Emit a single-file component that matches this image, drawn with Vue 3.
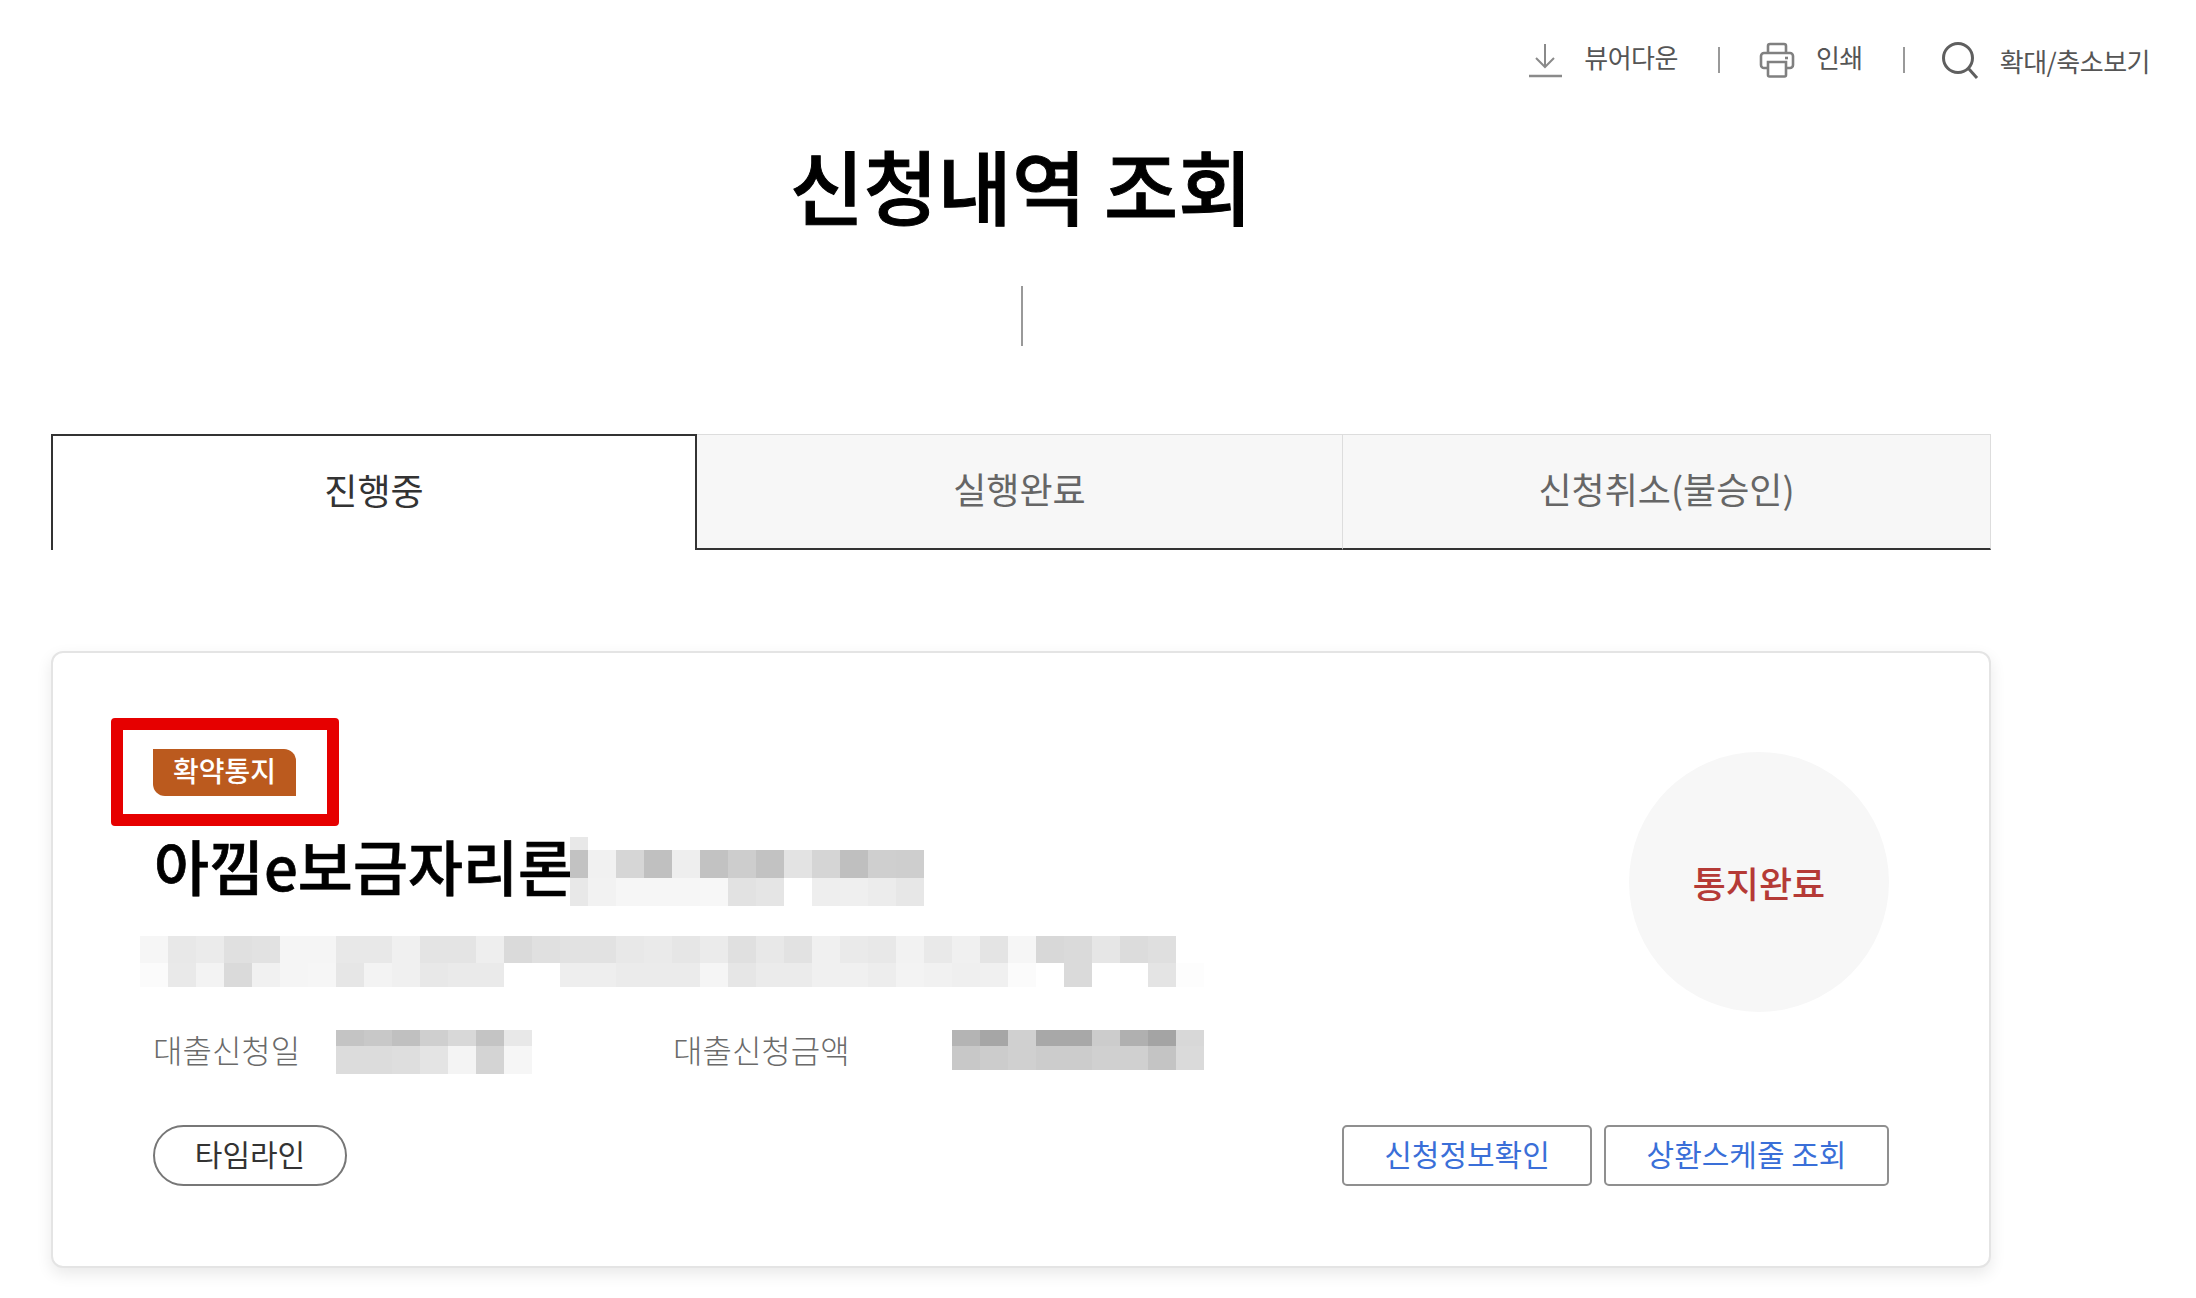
<script setup>
const mosaicTitle = [
  { h: 13, cells: ['#e8e8e8'] },
  { h: 28, cells: ['#c2c2c2','#f1f1f1','#d6d6d6','#c0c0c0','#eeeeee','#c2c2c2','#cdcdcd','#c2c2c2','#e3e3e3','#d5d5d5','#bfbfbf','#cfcfcf','#cecece'] },
  { h: 28, cells: ['#e8e8e8','#f2f2f2','#f6f6f6','#f6f6f6','#f6f6f6','#f7f7f7','#e2e2e2','#e5e5e5','#ffffff','#eeeeee','#efefef','#ececec','#e7e7e7'] },
]
const mosaicAddr = [
  { h: 27, cells: ['#f6f6f6','#e8e8e8','#ebebeb','#e0e0e0','#e2e2e2','#f5f5f5','#f5f5f5','#e8e8e8','#e8e8e8','#f0f0f0','#e4e4e4','#e4e4e4','#eeeeee','#dadada','#e0e0e0','#e2e2e2','#e2e2e2','#e8e8e8','#eaeaea','#e6e6e6','#ebebeb','#e0e0e0','#e8e8e8','#e2e2e2','#f0f0f0','#eaeaea','#e8e8e8','#f2f2f2','#e9e9e9','#f0f0f0','#e4e4e4','#f6f6f6','#d8d8d8','#dadada','#e6e6e6','#dcdcdc','#dfdfdf','#ffffff'] },
  { h: 24, cells: ['#fbfbfb','#e9e9e9','#f3f3f3','#dadada','#f1f1f1','#f5f5f5','#f6f6f6','#e6e6e6','#f3f3f3','#f0f0f0','#e8e8e8','#eaeaea','#eaeaea','#ffffff','#ffffff','#eeeeee','#eeeeee','#ebebeb','#ebebeb','#ebebeb','#f5f5f5','#e6e6e6','#ebebeb','#ebebeb','#f0f0f0','#f0f0f0','#ededed','#f3f3f3','#f1f1f1','#efefef','#f0f0f0','#fbfbfb','#ffffff','#dadada','#ffffff','#ffffff','#e4e4e4','#fdfdfd'] },
]
const mosaicDate = [
  { h: 16, cells: ['#c4c4c4','#c8c8c8','#c0c0c0','#cfcfcf','#d8d8d8','#c4c4c4','#e8e8e8'] },
  { h: 28, cells: ['#dcdcdc','#dcdcdc','#dedede','#e4e4e4','#f4f4f4','#d4d4d4','#f6f6f6'] },
]
const mosaicAmount = [
  { h: 16, cells: ['#b4b4b4','#a6a6a6','#d0d0d0','#a8a8a8','#a8a8a8','#cccccc','#b0b0b0','#a4a4a4','#d8d8d8'] },
  { h: 24, cells: ['#c8c8c8','#cccccc','#d0d0d0','#cccccc','#cccccc','#d0d0d0','#d0d0d0','#c4c4c4','#dadada'] },
]
const tabs = ['진행중', '실행완료', '신청취소(불승인)']
</script>

<template>
  <div class="page">
    <div class="tools">
      <div class="tool">
        <svg width="36" height="36" viewBox="0 0 36 36" fill="none" stroke="#8a8a8a" stroke-width="2">
          <path d="M18 2v23M9 16l9 9 9-9" />
          <path d="M2 34h33" stroke-width="2.5" />
        </svg>
        <span>뷰어다운</span>
      </div>
      <i class="sep s1"></i>
      <div class="tool">
        <svg width="36" height="36" viewBox="0 0 36 36" fill="none" stroke="#808080" stroke-width="2.6">
          <path d="M9 11V4a2 2 0 0 1 2-2h14a2 2 0 0 1 2 2v7" />
          <path d="M9 26H5a3 3 0 0 1-3-3V14a3 3 0 0 1 3-3h26a3 3 0 0 1 3 3v9a3 3 0 0 1-3 3h-4" />
          <path d="M9 20h18v13a1.5 1.5 0 0 1-1.5 1.500h-15A1.500 1.500 0 0 1 9 33z" />
          <path d="M26 16h3" />
        </svg>
        <span>인쇄</span>
      </div>
      <i class="sep s2"></i>
      <div class="tool zoomtool">
        <svg width="38" height="38" viewBox="0 0 38 38" fill="none" stroke="#5f5f5f" stroke-width="3">
          <circle cx="17" cy="17" r="14.500" />
          <path d="M27.500 27.500L36 37" />
        </svg>
        <span>확대/축소보기</span>
      </div>
    </div>

    <div class="content">
      <h1 class="title">신청내역 조회</h1>
      <div class="divider"></div>

      <div class="tabs">
        <div v-for="(t, i) in tabs" :key="t" class="tab" :class="{ active: i === 0 }">{{ t }}</div>
      </div>

      <section class="card">
        <div class="card-main">
          <div class="badge-box"><span class="badge">확약통지</span></div>
          <div class="name-row">
            <h2 class="name">아낌e보금자리론</h2>
            <div class="mosaic title-mosaic">
              <div v-for="(r, i) in mosaicTitle" :key="i" class="m-row" :style="{ height: r.h + 'px' }">
                <b v-for="(c, j) in r.cells" :key="j" class="m-cell" :style="{ background: c }"></b>
              </div>
            </div>
          </div>
          <div class="mosaic addr">
            <div v-for="(r, i) in mosaicAddr" :key="i" class="m-row" :style="{ height: r.h + 'px' }">
              <b v-for="(c, j) in r.cells" :key="j" class="m-cell" :style="{ background: c }"></b>
            </div>
          </div>
          <div class="info">
            <span class="label l1">대출신청일</span>
            <div class="mosaic">
              <div v-for="(r, i) in mosaicDate" :key="i" class="m-row" :style="{ height: r.h + 'px' }">
                <b v-for="(c, j) in r.cells" :key="j" class="m-cell" :style="{ background: c }"></b>
              </div>
            </div>
            <span class="label l2">대출신청금액</span>
            <div class="mosaic">
              <div v-for="(r, i) in mosaicAmount" :key="i" class="m-row" :style="{ height: r.h + 'px' }">
                <b v-for="(c, j) in r.cells" :key="j" class="m-cell" :style="{ background: c }"></b>
              </div>
            </div>
          </div>
        </div>
        <div class="circle">통지완료</div>
        <div class="actions">
          <button class="pill">타임라인</button>
          <div class="btns">
            <button class="btn w1">신청정보확인</button>
            <button class="btn w2">상환스케줄 조회</button>
          </div>
        </div>
      </section>
    </div>
  </div>
</template>

<style>
html, body { margin: 0; background: #fff; }
</style>

<style scoped>
.page {
  width: 2196px;
  height: 1298px;
  overflow: hidden;
  font-family: "Noto Sans CJK KR", "Noto Sans", sans-serif;
  box-sizing: border-box;
  position: relative;
}
.tools {
  display: flex;
  align-items: center;
  justify-content: flex-end;
  height: 36px;
  padding: 42px 46px 0 0;
  color: #555;
  font-size: 26px;
}
.tool { display: flex; align-items: center; gap: 21px; }
.tool span { position: relative; top: -4px; letter-spacing: -0.5px; }
.zoomtool span { top: 0; }
.sep { width: 2px; height: 26px; background: #999; }
.s1 { margin: 0 39px 0 40px; }
.s2 { margin: 0 36px 0 40px; }
.content { width: 1940px; margin-left: 51px; }
.title {
  margin: 48px 0 0;
  text-align: center;
  font-size: 80.5px;
  line-height: 116px;
  font-weight: 500;
  -webkit-text-stroke: 1px #000;
  color: #000;
}
.divider { width: 2px; height: 60px; background: #999; margin: 44px 0 0 970px; }
.tabs { display: grid; grid-template-columns: 646px 646px 1fr; margin-top: 88px; height: 116px; }
.tab {
  display: flex;
  align-items: center;
  justify-content: center;
  box-sizing: border-box;
  background: #f7f7f7;
  border: 1px solid #ddd;
  border-left: 0;
  border-bottom: 2px solid #333;
  color: #666;
  font-size: 36px;
  padding-bottom: 8px;
}
.tab.active {
  background: #fff;
  color: #333;
  border: 2px solid #333;
  border-bottom: 0;
}
.card {
  margin-top: 101px;
  height: 617px;
  box-sizing: border-box;
  border: 2px solid #e4e4e4;
  border-radius: 12px;
  box-shadow: 0 6px 16px rgba(0, 0, 0, 0.09);
  display: grid;
  grid-template-columns: 1fr 260px;
  grid-template-rows: 1fr auto;
  padding: 66px 100px 80px;
  background: #fff;
  position: relative;
}
.card-main { grid-column: 1; grid-row: 1; min-width: 0; }
.badge-box {
  position: absolute;
  left: 58px;
  top: 65px;
  width: 228px;
  height: 108px;
  box-sizing: border-box;
  border: 12px solid #e60000;
  border-radius: 4px;
  padding: 19px 0 0 30px;
}
.badge {
  display: block;
  width: 143px;
  height: 47px;
  background: #bb5a1e;
  border-radius: 0 12px 0 12px;
  color: #fff;
  font-size: 28px;
  font-weight: 500;
  line-height: 42px;
  text-align: center;
  white-space: nowrap;
}
.name-row { display: flex; align-items: flex-start; margin-top: 104px; }
.name {
  margin: 0;
  padding-left: 1px;
  box-sizing: border-box;
  font-size: 59.8px;
  line-height: 84px;
  font-weight: 500;
  -webkit-text-stroke: 0.7px #000;
  color: #000;
  width: 417px;
  flex: none;
  white-space: nowrap;
}
.mosaic { flex: none; }
.m-row { display: flex; }
.m-cell { width: 28px; flex: none; display: block; }
.title-mosaic { margin-top: 14px; }
.title-mosaic .m-cell:first-child { width: 18px; }
.addr { margin-left: -13px; margin-top: 29px; }
.info { display: flex; align-items: flex-start; margin-top: 43px; }
.label { color: #6a6a6a; font-size: 32px; line-height: 44px; font-weight: 300; white-space: nowrap; margin-top: -3px; }
.l1 { width: 183px; }
.l2 { width: 279px; margin-left: 141px; }
.circle {
  grid-column: 2;
  grid-row: 1;
  width: 260px;
  height: 260px;
  border-radius: 50%;
  background: #f7f7f7;
  color: #b53a36;
  font-size: 36px;
  font-weight: 500;
  display: flex;
  align-items: center;
  justify-content: center;
  margin-top: 33px;
}
.actions {
  grid-column: 1 / 3;
  grid-row: 2;
  display: flex;
  justify-content: space-between;
  align-items: center;
}
button { font-family: inherit; cursor: pointer; padding: 0 0 5px; background: #fff; box-sizing: border-box; }
.pill {
  width: 194px;
  height: 61px;
  border: 2px solid #777;
  border-radius: 31px;
  color: #333;
  font-size: 30px;
}
.btns { display: flex; gap: 12px; }
.btn {
  height: 61px;
  border: 2px solid #8f8f8f;
  border-radius: 5px;
  color: #3a6fd8;
  font-size: 30px;
}
.w1 { width: 250px; }
.w2 { width: 285px; }
</style>
